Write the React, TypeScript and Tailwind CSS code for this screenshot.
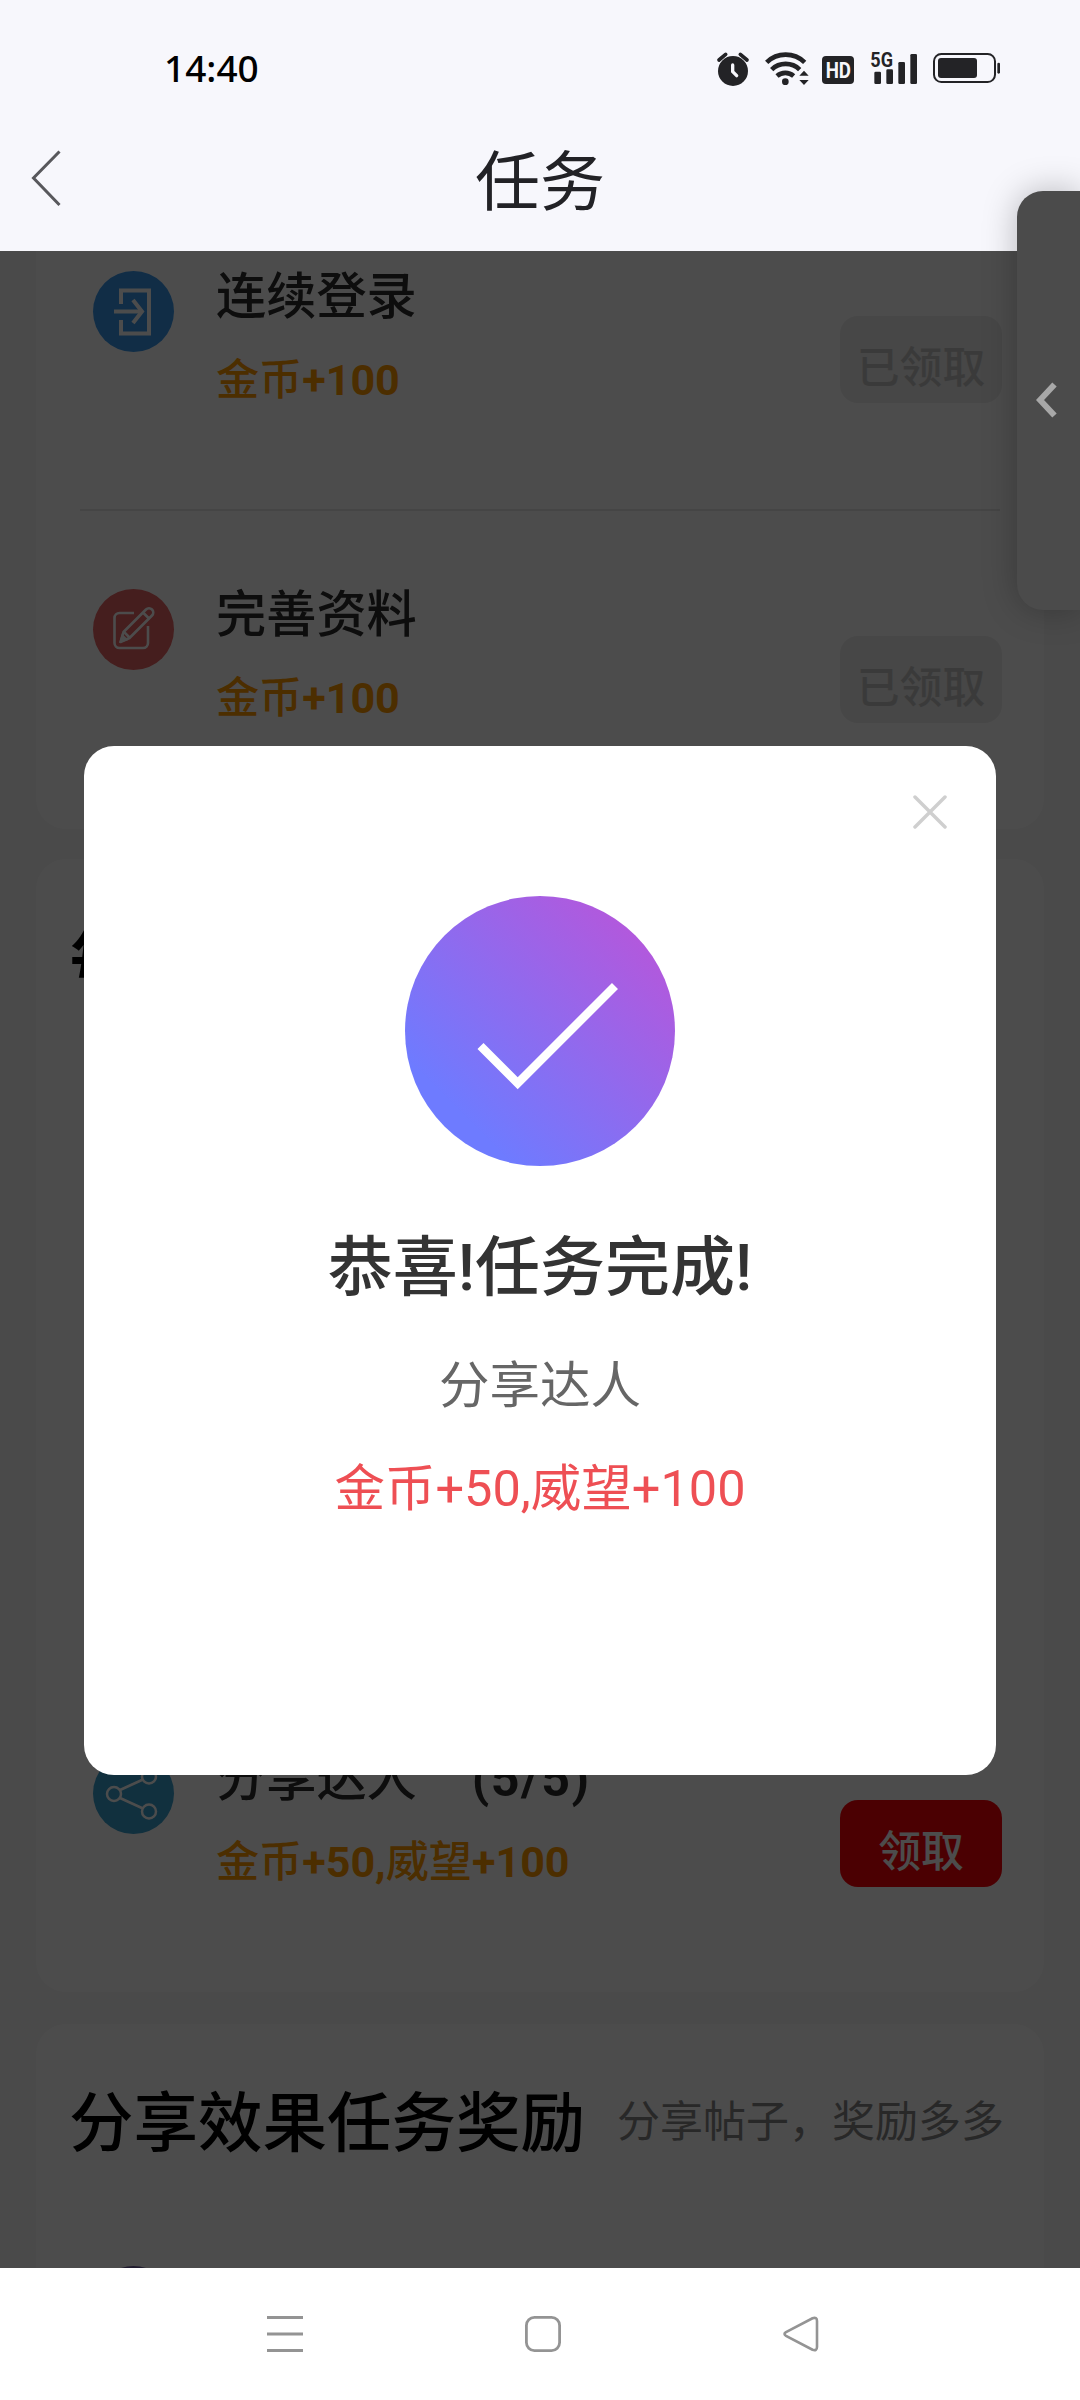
import React from "react";

const LoginIcon = () => (
  <svg viewBox="0 0 81 81" className="h-full w-full" fill="none" stroke="#fff" strokeWidth="4">
    <path d="M28 33V19.5h28v43H28V49" />
    <path d="M21 40.5h27" />
    <path d="M40 29l9 11.5L40 52" />
  </svg>
);

const EditIcon = () => (
  <svg viewBox="0 0 81 81" className="h-full w-full" fill="none" stroke="#fff" strokeWidth="2.6">
    <path d="M41 24H26.500a5 5 0 0 0-5 5v25a5 5 0 0 0 5 5H50a5 5 0 0 0 5-5V37" />
    <path d="M27.500 53l3-10 22.500-22.500a4 4 0 0 1 6 6L36.500 49z" strokeLinejoin="round" />
    <path d="M50.500 24l6 6M31 43l5.500 5.500" />
    <path d="M28 52l1.500-5 3.500 3.500z" fill="#fff" />
  </svg>
);

const ShareIcon = () => (
  <svg viewBox="0 0 81 81" className="h-full w-full" fill="none" stroke="#fff" strokeWidth="2.5">
    <circle cx="21" cy="41" r="7" />
    <circle cx="56" cy="23.500" r="7" />
    <circle cx="56" cy="58.500" r="7" />
    <path d="M27 37L50 26.500M27 45L50 55.500" />
  </svg>
);

const StatusIcons = () => (
  <svg width="360" height="80" viewBox="0 0 1080 240" fill="#232326">
    <circle cx="159" cy="123" r="45" />
    <path d="M117 90l20-17M201 90l-20-17" stroke="#232326" strokeWidth="11" strokeLinecap="round" />
    <path d="M158 105v20l12 12" stroke="#f7f7fc" strokeWidth="10" strokeLinecap="round" fill="none" />
    <g fill="none" stroke="#232326" strokeWidth="14">
      <path d="M260 97a82 82 0 0 1 114 0" />
      <path d="M275 119a60 60 0 0 1 84 0" />
      <path d="M291 138a38 38 0 0 1 50 0" />
    </g>
    <circle cx="316" cy="155" r="10" />
    <path d="M358 137l14-15 14 15zM358 150l14 15 14-15z" />
    <rect x="426" y="78" width="96" height="84" rx="12" />
    <text x="475" y="143" textAnchor="middle" fontSize="64" fontWeight="700" textLength="76" lengthAdjust="spacingAndGlyphs" fill="#f7f7fc">
      HD
    </text>
    <text x="571" y="110" fontSize="60" fontWeight="700" textLength="68" lengthAdjust="spacingAndGlyphs">
      5G
    </text>
    <rect x="583" y="125" width="20" height="37" rx="4" />
    <rect x="619" y="118" width="20" height="44" rx="4" />
    <rect x="655" y="96" width="20" height="66" rx="4" />
    <rect x="691" y="72" width="20" height="90" rx="4" />
    <rect x="762" y="72" width="183" height="84" rx="22" fill="none" stroke="#232326" strokeWidth="6" />
    <rect x="774" y="84" width="117" height="60" rx="9" />
    <rect x="952" y="98" width="8" height="33" rx="4" />
  </svg>
);

// latin runs are set bolder than the Chinese ones
const Reward = ({ text }: { text: string }) => (
  <>
    {text.split(/([+\d,]+)/).map((part, i) => (
      <span key={i} className={i % 2 ? "font-bold" : "font-medium"}>
        {part}
      </span>
    ))}
  </>
);

type TaskProps = {
  icon?: React.ReactNode;
  color: string;
  name?: string;
  progress?: string;
  reward?: string;
  done?: boolean;
  buttonMargin?: string;
};

const Task = ({ icon, color, name, progress, reward = "", done, buttonMargin }: TaskProps) => (
  <div className="flex h-[134px] shrink-0 items-start pl-[57px] pr-[42px]">
    <div className={`h-[81px] w-[81px] shrink-0 rounded-full ${color}`}>{icon}</div>
    <div className="ml-[42px] pt-0.5">
      <div className="flex whitespace-nowrap text-[50.2px] font-medium leading-[48px] text-[#2e2e2e]">
        {name}
        {progress && <span className="ml-[55px] font-bold tracking-[1.5px]">{progress}</span>}
      </div>
      <div className="mt-9 whitespace-nowrap text-[43.1px] leading-[48px] text-[#ff9900]">
        <Reward text={reward} />
      </div>
    </div>
    {name && (
      <div
        className={`ml-auto flex h-[87px] w-[162px] items-center justify-center rounded-[18px] pt-[18px] text-[42.800px] font-medium leading-none ${buttonMargin} ${
          done ? "bg-[#eeeeee] text-[#c4c4c4]" : "bg-[#fc0008] text-white"
        }`}
      >
        {done ? "已领取" : "领取"}
      </div>
    )}
  </div>
);

const Header = () => (
  <header className="h-[251px] bg-[#f7f7fc]">
    <div className="flex h-[110px] items-start justify-between pl-[164px] pr-10 pt-[30px]">
      <span className="font-['Noto_Sans'] text-[37px] font-medium leading-[76px] text-black">14:40</span>
      <StatusIcons />
    </div>
    <div className="flex h-[141px] items-start">
      <svg width="60" height="60" viewBox="0 0 60 60" fill="none" stroke="#58585c" strokeWidth="3" className="ml-[30px] mt-[38px]">
        <path d="M29.500 3.500L3.500 30L29.500 57" />
      </svg>
      <h1 className="grow pr-[90px] pt-[41px] text-center text-[65px] leading-[64px] text-[#222226]">任务</h1>
    </div>
  </header>
);

const SuccessModal = () => (
  <div className="relative flex h-[1029px] w-[912px] flex-col items-center rounded-[30px] bg-white pt-[150px]">
    <svg className="absolute right-[49px] top-[49px]" width="34" height="34" viewBox="0 0 34 34" stroke="#cfcfcf" strokeWidth="3.500" strokeLinecap="round">
      <path d="M2 2l30 30M32 2L2 32" />
    </svg>
    <div className="h-[270px] w-[270px] rounded-full bg-linear-to-tr/srgb from-[#6e7bff] from-20% to-[#b159dd] to-85%">
      <svg viewBox="0 0 270 270" fill="none" stroke="#fff" strokeWidth="8.500">
        <path d="M75.500 150l37.200 37.200L210 90" />
      </svg>
    </div>
    <div className="mt-[69px] text-[65px] font-medium leading-[66px] text-[#333]">恭喜!任务完成!</div>
    <div className="mt-[60px] text-[50.500px] leading-[50px] text-[#666]">分享达人</div>
    <div className="mt-[53px] text-[50.500px] leading-[50px] text-[#ee4f54]">金币+50,威望+100</div>
  </div>
);

const NavBar = () => (
  <nav className="flex h-[132px] items-center gap-[222px] bg-white pl-[267px]">
    <svg width="36" height="36" viewBox="0 0 36 36" stroke="#949494" strokeWidth="3">
      <path d="M0 1.500h36M0 18h36M0 34.500h36" />
    </svg>
    <svg width="36" height="36" viewBox="0 0 36 36" fill="none" stroke="#949494" strokeWidth="2.800">
      <rect x="1.400" y="1.400" width="33.200" height="33.200" rx="8" />
    </svg>
    <svg width="36" height="36" viewBox="0 0 36 36" fill="none" stroke="#949494" strokeWidth="2.600">
      <path d="M3 16.200L29.500 2.300Q34 .8 34 5v26q0 4.200-4.500 2.700L3 19.800q-3-1.800 0-3.600z" />
    </svg>
  </nav>
);

const App = () => {
  return (
    <div className="relative h-[2400px] w-[1080px] overflow-hidden font-['Roboto','Noto_Sans_CJK_SC',sans-serif]">
      <Header />
      <main className="relative flex h-[2017px] flex-col overflow-hidden bg-[#f7f7f7] px-9">
        <section className="h-[578px] shrink-0 rounded-b-[30px] bg-white pt-5">
          <Task icon={<LoginIcon />} color="bg-[#3a98ec]" name="连续登录" reward="金币+100" done buttonMargin="mt-[45px]" />
          <div className="ml-11 mr-[44px] mt-[104px] h-0.5 bg-[#e6e6e6]" />
          <div className="mt-[78px]">
            <Task icon={<EditIcon />} color="bg-[#e86464]" name="完善资料" reward="金币+100" done buttonMargin="mt-[47px]" />
          </div>
        </section>

        <section className="mt-[30px] flex h-[1133px] shrink-0 flex-col justify-between rounded-[30px] bg-white pb-[105px] pt-[67px]">
          <h2 className="pl-[34px] text-[64.500px] font-bold leading-[64px] text-black">每日任务</h2>
          <Task icon={<ShareIcon />} color="bg-[#3aa0cf]" name="分享达人" progress="(5/5)" reward="金币+50,威望+100" buttonMargin="mt-[47px]" />
        </section>

        <section className="mt-8 h-[600px] shrink-0 rounded-t-[30px] bg-white pt-[68px]">
          <div className="mb-[110px] flex items-center justify-between pl-[33px] pr-10">
            <h2 className="text-[64.500px] font-medium leading-[64px] text-black">分享效果任务奖励</h2>
            <span className="-mt-1 text-[43px] leading-[64px] text-[#888]">分享帖子，奖励多多</span>
          </div>
          <Task color="bg-[#6a5c9a]" />
        </section>

        <div className="absolute inset-0 flex items-start justify-center bg-black/70 pt-[495px]">
          <SuccessModal />
        </div>
      </main>
      <NavBar />

      {/* edge drawer handle */}
      <div className="absolute right-0 top-[191px] flex h-[419px] w-[63px] items-center rounded-l-[26px] bg-[#4b4b4b] pb-px pl-[19px] shadow-[0_0_34px_rgba(0,0,0,0.26)]">
        <svg width="22" height="36" viewBox="0 0 22 36" fill="none" stroke="#a8a8a8" strokeWidth="6">
          <path d="M18.500 2.500L4 18l14.500 15.500" />
        </svg>
      </div>
    </div>
  );
};

export default App;
